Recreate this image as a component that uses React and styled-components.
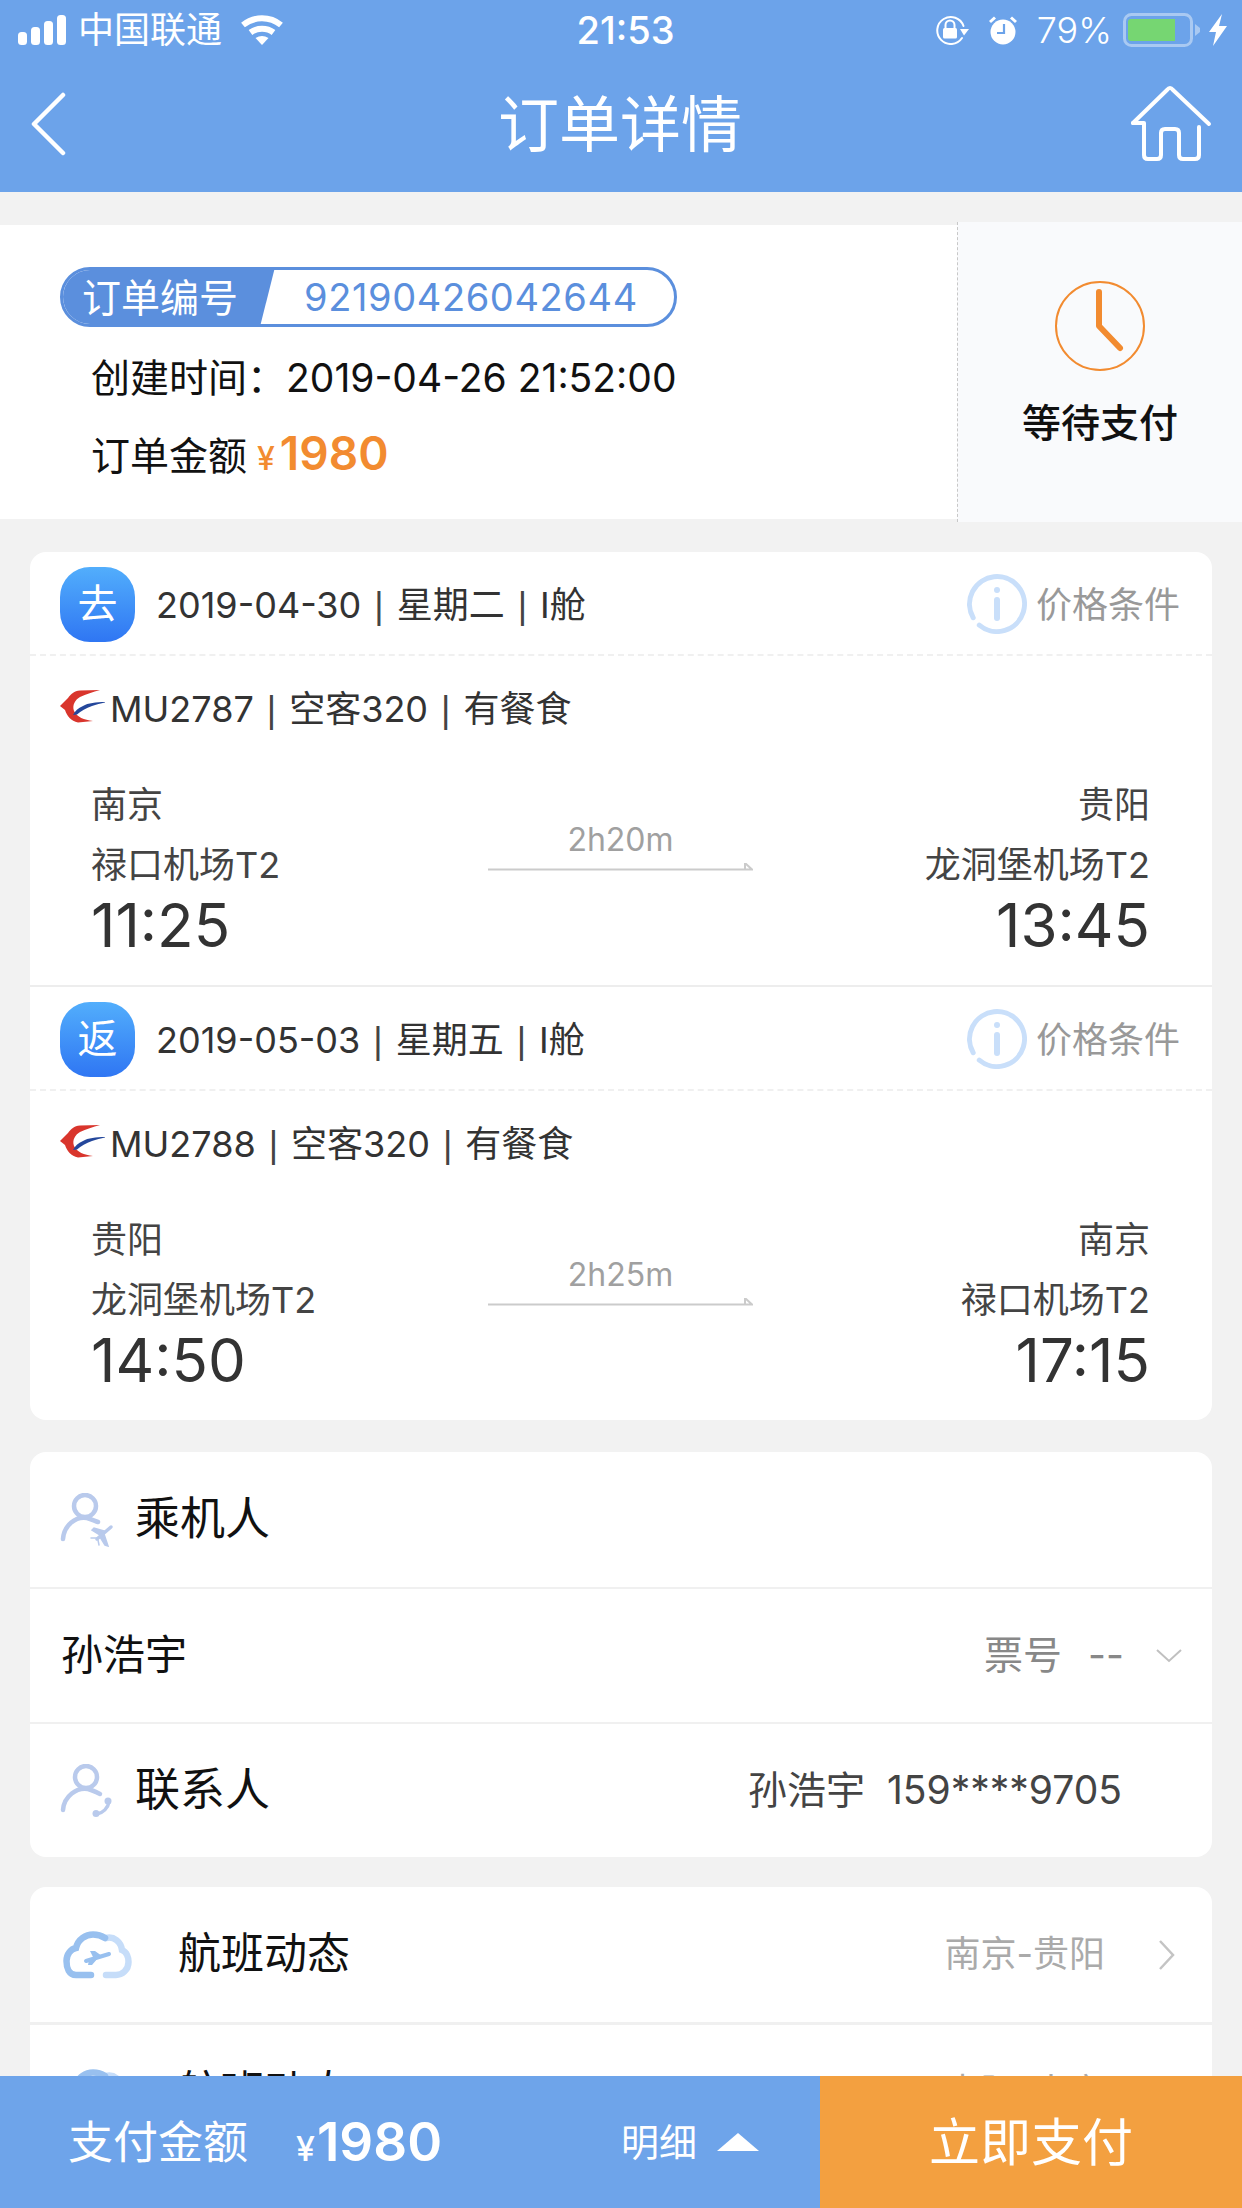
import React from "react";
import styled, { createGlobalStyle } from "styled-components";

const Global = createGlobalStyle`
  html, body { margin: 0; padding: 0; background: #f2f2f2; }
  * { box-sizing: border-box; }
`;
const FONT = `Inter, "Noto Sans CJK SC", sans-serif`;

const Page = styled.div`
  width: 1242px; height: 2208px; display: flex; flex-direction: column;
  overflow: hidden; background: #f2f2f2; font-family: ${FONT}; color: #333;
`;
const Header = styled.header`
  flex: none; height: 192px; background: #6ca3ea; color: #fff; display: flex; flex-direction: column;
`;
const StatusBar = styled.div`
  height: 60px; display: grid; grid-template-columns: 1fr auto 1fr; align-items: center; font-size: 35px; padding: 0 15px 0 18px;
`;
const StatusSide = styled.div`
  display: flex; align-items: center; gap: 9px;
  justify-content: ${p => (p.$end ? "flex-end" : "flex-start")};
`;
const Carrier = styled.span` margin: 0 10px 0 3px; font-size: 36px; line-height: 1; `;
const Clock = styled.div` font-size: 38px; font-weight: 500; padding-left: 6px; line-height: 1; `;
const Percent = styled.span` font-size: 36px; font-weight: 300; margin: 0 2px 0 11px; line-height: 1; `;
const Gap = styled.span` width: ${p => p.$w}px; flex: none; `;
const NavBar = styled.div`
  flex: 1; display: flex; align-items: center; justify-content: space-between; padding: 0 30px 4px 30px;
`;
const NavTitle = styled.h1`
  margin: 2px 0 0; font-size: 61px; font-weight: 400; line-height: 1; flex: 1; text-align: center; padding-left: 44px;
`;
const Main = styled.main`
  flex: 1; min-height: 0; overflow: hidden; display: flex; flex-direction: column; padding-top: 30px;
`;
const OrderRow = styled.section` flex: none; height: 300px; display: flex; `;
const OrderInfo = styled.div`
  flex: 1; margin: 3px 0; background: #fff; padding: 42px 0 0 60px; display: flex; flex-direction: column; align-items: flex-start;
`;
const Pill = styled.div`
  width: 617px; height: 60px; border: 3px solid #5b8fdd; border-radius: 30px; display: flex; align-items: center;
  overflow: hidden; background: #fff;
`;
const PillLabel = styled.div`
  align-self: stretch; width: 215px; margin: -3px 0 -3px -3px; padding-left: 22px; background: #5b8fdd; color: #fff; font-size: 39px;
  display: flex; align-items: center; clip-path: polygon(0 0, 100% 0, 93% 100%, 0 100%); flex: none; line-height: 1;
`;
const PillValue = styled.div`
  color: #5b8fdd; font-size: 38px; margin-left: 29px; line-height: 1; letter-spacing: 0.6px;
`;
const InfoLine = styled.div`
  margin: ${p => p.$mt}px 0 0 31px; font-size: 39px; color: #111; height: 60px; line-height: 60px; display: flex; align-items: baseline;
`;
const Money = styled.span` color: #f28b30; font-weight: 600; font-size: 46px; margin-left: 10px; `;
const Yen = styled.span` font-size: 32px; font-weight: 500; margin-right: 5px; `;
const StatusPanel = styled.div`
  flex: none; width: 285px; background: #f9fafc; border-left: 1px dashed #c8c8c8; display: flex; flex-direction: column; align-items: center; padding-top: 59px;
`;
const StatusText = styled.div` font-size: 39px; font-weight: 500; color: #111; margin-top: 29px; line-height: 1.2; `;

const Card = styled.section`
  flex: none; margin: ${p => p.$mt}px 30px 0; background: #fff; border-radius: 16px; overflow: hidden;
`;
const SegHeader = styled.div`
  height: 104px; display: flex; align-items: center; padding: 2px 30px 0; border-bottom: 2px dashed #f0f0f0; font-size: 36px; color: #333;
`;
const Badge = styled.div`
  width: 75px; height: 75px; border-radius: 30px; background: linear-gradient(#52aefc, #2f76f3); color: #fff; font-size: 40px;
  display: flex; align-items: center; justify-content: center; margin-right: 21px; flex: none; line-height: 1;
`;
const Spacer = styled.div` flex: 1; `;
const PriceLink = styled.div` display: flex; align-items: center; gap: 9px; color: #999; font-size: 36px; margin-right: 2px; `;
const Lifted = styled.span` margin-bottom: ${p => p.$by}px; `;
const FlightLine = styled.div`
  height: 104px; display: flex; align-items: center; padding: 0 30px 2px; font-size: 36px; gap: 4px; color: #333;
`;
const Sep = styled.span` font-family: "Liberation Sans", sans-serif; font-weight: 400; margin: 0 13px; color: #444; `;
const Route = styled.div`
  display: grid; grid-template-columns: 1fr 265px 1fr; padding: 15px 62px 30px 61px; align-items: start;
  ${p => p.$border && "border-bottom: 2px solid #ededed;"}
`;
const Stop = styled.div`
  display: flex; flex-direction: column; align-items: ${p => (p.$right ? "flex-end" : "flex-start")};
`;
const StopLine = styled.div` font-size: 36px; line-height: 60px; height: 60px; color: #444; white-space: nowrap; `;
const StopTime = styled.div` font-size: 60px; line-height: 60px; height: 60px; color: #333; `;
const Duration = styled.div` display: flex; flex-direction: column; align-items: center; padding-top: 47px; `;
const DurText = styled.div` font-size: 32px; line-height: 40px; color: #a0a0a0; margin: -2px 0 3px; `;
const Row = styled.div`
  height: ${p => p.$h || 135}px; display: flex; align-items: center; padding: 0 30px;
  ${p => p.$line && `border-bottom: ${p.$line}px solid #f0f0f0;`}
`;
const RowTitle = styled.div` font-size: ${p => p.$size}px; color: #111; margin: 0 0 2px ${p => p.$ml || 0}px; line-height: 1; `;
const Muted = styled.div` font-size: ${p => p.$size || 36}px; color: ${p => p.$c || "#888"}; margin: 0 ${p => p.$mr || 0}px 2px 0; line-height: 1; `;
const Contact = styled.div` font-size: 39px; color: #444; margin: 0 60px 2px 0; line-height: 1; `;
const Bottom = styled.footer` flex: none; height: 132px; display: flex; `;
const PayInfo = styled.div`
  width: 820px; background: #6ea4ea; color: #fff; display: flex; align-items: center; padding-left: 68px;
`;
const PayLabel = styled.div` font-size: 45px; line-height: 1; `;
const PayAmount = styled.div` font-size: 53px; font-weight: 600; margin-left: 48px; display: flex; align-items: baseline; line-height: 1; `;
const PayYen = styled.span` font-size: 34px; font-weight: 500; margin-right: 2px; `;
const Detail = styled.div` font-size: 38px; margin-left: auto; margin-right: 20px; line-height: 1; `;
const Triangle = styled.div`
  width: 42px; height: 18px; background: #fff; clip-path: polygon(50% 0, 100% 100%, 0 100%); margin-right: 61px;
`;
const PayButton = styled.button`
  flex: 1; border: 0; background: #f3a040; color: #fff; font-size: 51px; font-family: inherit; padding: 0 0 6px;
`;
const ChevronRight = styled.svg` margin-right: 7px; flex: none; `;

const Signal = () => (
  <svg width="48" height="30" viewBox="0 0 48 30" fill="#fff">
    <rect x="0" y="17" width="9" height="13" rx="3.5" /><rect x="13" y="12" width="9" height="18" rx="3.5" />
    <rect x="26" y="6" width="9" height="24" rx="3.5" /><rect x="39" y="0" width="9" height="30" rx="3.5" />
  </svg>
);
const Wifi = () => (
  <svg width="42" height="30" viewBox="0 0 42 30" fill="none" stroke="#fff" strokeWidth="6">
    <path d="M2 10 C13 1 29 1 40 10" /><path d="M9.5 17.5 C16 12.5 26 12.5 32.5 17.5" />
    <path d="M14.5 23 Q21 19 27.5 23 L21 30 Z" fill="#fff" stroke="none" />
  </svg>
);
const RotLock = () => (
  <svg width="34" height="30" viewBox="0 0 34 30" fill="none">
    <path d="M27 23 A13.5 13.5 0 1 1 28.5 11" stroke="#fff" strokeWidth="2" strokeLinecap="round" />
    <path d="M25 14 L34 14 L29 20.5 Z" fill="#fff" />
    <rect x="8" y="13" width="14" height="10.5" rx="1.5" fill="#fff" />
    <path d="M10.5 14 V10 A4.5 4.5 0 0 1 19.5 10 V14" stroke="#fff" strokeWidth="2" />
  </svg>
);
const Alarm = () => (
  <svg width="28" height="29" viewBox="0 0 28 29">
    <circle cx="14" cy="16" r="12.5" fill="#fff" />
    <path d="M1 6 L6 1.5 M27 6 L22 1.5" stroke="#fff" strokeWidth="3" />
    <path d="M15 8 V17 H8" stroke="#6ca3ea" strokeWidth="2.2" fill="none" />
  </svg>
);
const Battery = () => (
  <svg width="77" height="34" viewBox="0 0 77 34">
    <rect x="1.5" y="1.5" width="67" height="31" rx="7" fill="none" stroke="#a9c9f2" strokeWidth="3" />
    <path d="M8 6 H52 V28 H8 Q5 28 5 25 V9 Q5 6 8 6 Z" fill="#76d672" />
    <path d="M72 11 L77 15 V19 L72 23 Z" fill="#a9c9f2" />
  </svg>
);
const Bolt = () => (
  <svg width="18" height="32" viewBox="0 0 18 32"><path d="M13 0 L0 18 H7 L4 32 L18 12 H10 Z" fill="#fff" /></svg>
);
const Back = () => (
  <svg width="36" height="64" viewBox="0 0 36 64" fill="none" stroke="#fff" strokeWidth="4.5" strokeLinecap="round" strokeLinejoin="round">
    <path d="M33 3 L4 32 L33 61" />
  </svg>
);
const Home = () => (
  <svg width="82" height="78" viewBox="0 0 82 78" fill="none" stroke="#fff" strokeWidth="4" strokeLinejoin="round" strokeLinecap="round">
    <path d="M3 38 L37 5 Q40 1 43 5 L79 39" />
    <path d="M3 38 H14 V70 Q14 74 18 74 H27 Q31 74 31 70 V48 Q31 44 35 44 H45 Q49 44 49 48 V70 Q49 74 53 74 H65 Q69 74 69 70 V42" />
  </svg>
);
const ClockIcon = () => (
  <svg width="90" height="90" viewBox="0 0 90 90" fill="none" stroke="#f28b30">
    <circle cx="45" cy="45" r="44" strokeWidth="2" />
    <path d="M44 11 V45 L65 67" strokeWidth="6" strokeLinecap="round" strokeLinejoin="round" />
  </svg>
);
const Info = () => (
  <svg width="60" height="60" viewBox="0 0 60 60" fill="none" stroke="#c9dffa" strokeWidth="5" strokeLinecap="round">
    <path d="M12.3 51.07 A27.5 27.5 0 1 0 6.18 43.75" />
    <path d="M30 26 V44" strokeWidth="6" />
    <circle cx="30" cy="16" r="3" fill="#c9dffa" stroke="none" />
  </svg>
);
const Logo = () => (
  <svg width="46" height="38" viewBox="0 0 46 38">
    <path d="M40 2 L20 2.5 C14 3 11 6 8 10 L0 18 L5 22 C7 28 11 33 18 34.5 L33 33 C24 32 17 29 14 23 C12 17 15 12 20 9 C26 6 33 4 40 2 Z" fill="#d9352c" />
    <path d="M45 14 C36 14 28 15 23 18 C18 20 15 23 13 27 L17 26.5 C21 23 26 20 32 18 C36 16.5 41 15.5 45 14.5 Z" fill="#24479b" />
  </svg>
);
const Arrow = () => (
  <svg width="265" height="8" viewBox="0 0 265 8" fill="none">
    <path d="M0 6.5 H264 L257 0 V6" stroke="#cbcbcb" strokeWidth="2" />
  </svg>
);
const PersonPlane = () => (
  <svg width="54" height="54" viewBox="0 0 54 54" fill="none" stroke="#b9caec" strokeWidth="4.5" strokeLinecap="round">
    <circle cx="25" cy="13" r="11" />
    <path d="M3 46 C4 32 16 23 27 25 C31 26 35 28 38 29" />
    <path d="M51 34 L37 46" strokeWidth="3.5" />
    <path d="M44 38 L34 35 L32 37 L40 42 Z M44 41 L48 53 L45 52 L40 44 Z M37 45 L31 45 M38 47 L39 52" fill="#b9caec" stroke="#b9caec" strokeWidth="1.5" />
  </svg>
);
const PersonPhone = () => (
  <svg width="54" height="54" viewBox="0 0 54 54" fill="none" stroke="#b9caec" strokeWidth="4.5" strokeLinecap="round">
    <circle cx="26" cy="13" r="11" />
    <path d="M3 46 C4 32 17 23 28 25 C32 26 36 28 40 30" />
    <path d="M49 38 C48 44 43 49 37 50" strokeWidth="3.5" />
    <circle cx="48" cy="37" r="3.5" fill="#b9caec" stroke="none" />
    <circle cx="36" cy="49.5" r="3.5" fill="#b9caec" stroke="none" />
  </svg>
);
const CloudMark = styled.svg` margin-left: 2px; flex: none; `;
const Cloud = () => (
  <CloudMark width="70" height="50" viewBox="0 0 70 50" fill="none" strokeWidth="6.5" strokeLinecap="round">
    <path d="M44 8 C52 6 59 12 60 20 C65 22 66.5 28 66.5 32 C66.5 40 60 45 54 45 H44" stroke="#c6ddf9" />
    <path d="M29 45 H14 C7 45 4.5 38 4.5 31 C4.5 24 9 19 14 18 C16 9 24 4.5 31 4.5 C36 4.5 40 6 43 8" stroke="#98c0ef" />
    <path d="M24 31 L47 24" stroke="#98c0ef" strokeWidth="4" />
    <path d="M28 21 L33 21 L40 26 L32 29 Z M27 30 L36 28 L30 35 L26 35 Z" fill="#98c0ef" />
  </CloudMark>
);
const Down = () => (
  <svg width="26" height="14" viewBox="0 0 26 14" fill="none" stroke="#c0c0c0" strokeWidth="2"><path d="M1 1 L13 12 L25 1" /></svg>
);
const Right = () => (
  <ChevronRight width="16" height="30" viewBox="0 0 16 30" fill="none" stroke="#c4c4c4" strokeWidth="2.5"><path d="M1 1 L14 15 L1 29" /></ChevronRight>
);

const Piped = ({ parts, lift }) => (
  <Lifted $by={lift}>
    {parts.map((t, i) => (
      <React.Fragment key={t}>
        {i > 0 && <Sep>|</Sep>}
        {t}
      </React.Fragment>
    ))}
  </Lifted>
);

const Segment = ({ badge, date, flight, from, to, dur, border }) => (
  <>
    <SegHeader>
      <Badge>{badge}</Badge>
      <Piped parts={date} lift={5} />
      <Spacer />
      <PriceLink><Info /><Lifted $by={4}>价格条件</Lifted></PriceLink>
    </SegHeader>
    <FlightLine><Logo /><Piped parts={flight} lift={2} /></FlightLine>
    <Route $border={border}>
      <Stop>
        <StopLine>{from[0]}</StopLine><StopLine>{from[1]}</StopLine><StopTime>{from[2]}</StopTime>
      </Stop>
      <Duration><DurText>{dur}</DurText><Arrow /></Duration>
      <Stop $right>
        <StopLine>{to[0]}</StopLine><StopLine>{to[1]}</StopLine><StopTime>{to[2]}</StopTime>
      </Stop>
    </Route>
  </>
);

export default function App() {
  return (
    <Page>
      <Global />
      <Header>
        <StatusBar>
          <StatusSide><Signal /><Carrier>中国联通</Carrier><Wifi /></StatusSide>
          <Clock>21:53</Clock>
          <StatusSide $end><RotLock /><Gap $w={2} /><Alarm /><Percent>79%</Percent><Battery /><Bolt /></StatusSide>
        </StatusBar>
        <NavBar>
          <Back />
          <NavTitle>订单详情</NavTitle>
          <Home />
        </NavBar>
      </Header>
      <Main>
        <OrderRow>
          <OrderInfo>
            <Pill>
              <PillLabel>订单编号</PillLabel>
              <PillValue>92190426042644</PillValue>
            </Pill>
            <InfoLine $mt={21}>创建时间：2019-04-26 21:52:00</InfoLine>
            <InfoLine $mt={15}>订单金额<Money><Yen>¥</Yen>1980</Money></InfoLine>
          </OrderInfo>
          <StatusPanel>
            <ClockIcon />
            <StatusText>等待支付</StatusText>
          </StatusPanel>
        </OrderRow>
        <Card $mt={30}>
          <Segment badge="去" date={["2019-04-30", "星期二", "I舱"]} flight={["MU2787", "空客320", "有餐食"]}
            from={["南京", "禄口机场T2", "11:25"]} to={["贵阳", "龙洞堡机场T2", "13:45"]} dur="2h20m" border />
          <Segment badge="返" date={["2019-05-03", "星期五", "I舱"]} flight={["MU2788", "空客320", "有餐食"]}
            from={["贵阳", "龙洞堡机场T2", "14:50"]} to={["南京", "禄口机场T2", "17:15"]} dur="2h25m" />
        </Card>
        <Card $mt={32}>
          <Row $h={137} $line={2}><PersonPlane /><RowTitle $size={45} $ml={21}>乘机人</RowTitle></Row>
          <Row $line={2}>
            <RowTitle $size={42} $ml={1}>孙浩宇</RowTitle><Spacer />
            <Muted $size={39} $mr={26}>票号</Muted><Muted $size={39} $mr={32}>--</Muted><Down />
          </Row>
          <Row $h={133}>
            <PersonPhone /><RowTitle $size={45} $ml={21}>联系人</RowTitle><Spacer />
            <Contact>孙浩宇&nbsp;&nbsp;159****9705</Contact>
          </Row>
        </Card>
        <Card $mt={30}>
          <Row $h={138} $line={3}>
            <Cloud /><RowTitle $size={43} $ml={46}>航班动态</RowTitle><Spacer />
            <Muted $c="#aaa" $mr={54}>南京-贵阳</Muted><Right />
          </Row>
          <Row>
            <Cloud /><RowTitle $size={43} $ml={46}>航班动态</RowTitle><Spacer />
            <Muted $c="#aaa" $mr={54}>贵阳-南京</Muted><Right />
          </Row>
        </Card>
      </Main>
      <Bottom>
        <PayInfo>
          <PayLabel>支付金额</PayLabel>
          <PayAmount><PayYen>¥</PayYen>1980</PayAmount>
          <Detail>明细</Detail>
          <Triangle />
        </PayInfo>
        <PayButton>立即支付</PayButton>
      </Bottom>
    </Page>
  );
}
